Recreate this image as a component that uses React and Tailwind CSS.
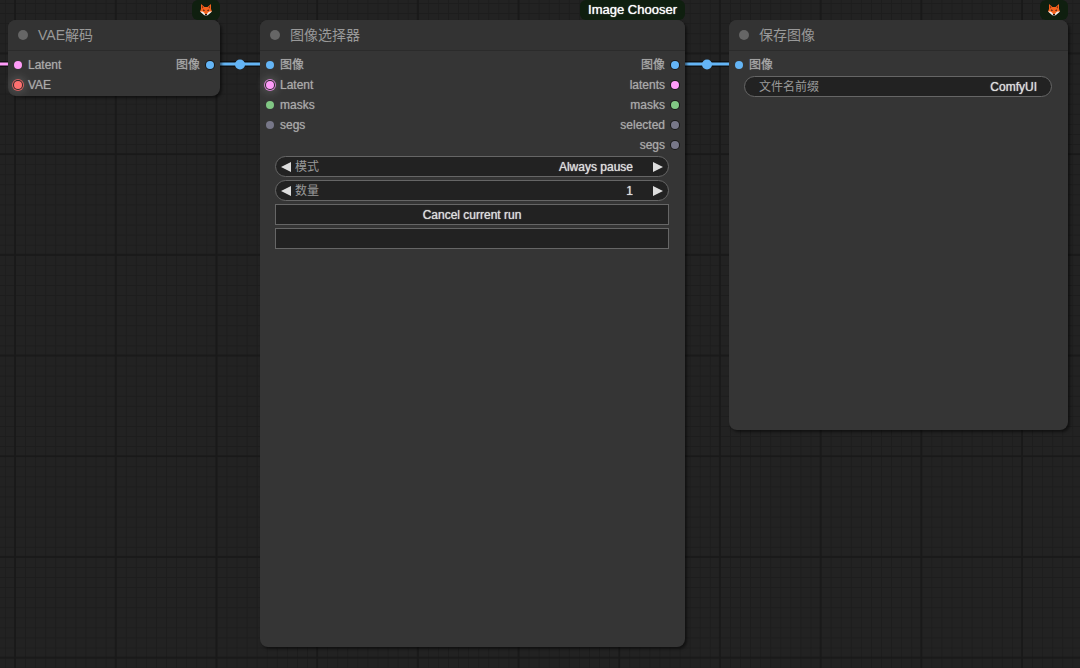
import React, { useState } from "react";
import clsx from "clsx";

const slotColors = {
  image: "bg-[#64b5f6]",
  latent: "bg-[#ff9cf9]",
  mask: "bg-[#81c784]",
  vae: "bg-[#ff7070]",
  any: "bg-[#777788]",
};

// Halo shown on inputs that accept a connection but have none yet
const haloColors = {
  latent:
    "shadow-[0_0_0_1px_#2a2a2a,0_0_0_2px_#d182cd,0_0_8px_4px_rgba(255,255,255,0.15)]",
  vae: "shadow-[0_0_0_1px_#2a2a2a,0_0_0_2px_#d35f5f,0_0_8px_4px_rgba(255,255,255,0.15)]",
};

const Grid = () => (
  <svg className="absolute inset-0 h-full w-full" aria-hidden="true">
    <defs>
      <pattern
        id="minor"
        width="10.07"
        height="10.07"
        x="15"
        y="53.4"
        patternUnits="userSpaceOnUse"
      >
        <path d="M0.5 0V10.07M0 0.5H10.07" stroke="#1d1d1d" />
      </pattern>
      <pattern
        id="major"
        width="100.7"
        height="100.7"
        x="14"
        y="52.4"
        patternUnits="userSpaceOnUse"
      >
        <path d="M1 0V100.7M0 1H100.7" stroke="#181818" strokeWidth="1.7" />
      </pattern>
    </defs>
    <rect width="100%" height="100%" fill="url(#minor)" />
    <rect width="100%" height="100%" fill="url(#major)" />
  </svg>
);

const Links = () => (
  <svg className="absolute inset-0 h-full w-full" aria-hidden="true">
    <path
      d="M0 64H18M211 64H270M675 64H739"
      stroke="#000"
      strokeOpacity="0.5"
      strokeWidth="6"
    />
    <path d="M0 64H18" stroke="#ff9cf9" strokeWidth="3" />
    <path d="M211 64H270M675 64H739" stroke="#64b5f6" strokeWidth="3" />
    <circle cx="240" cy="64.5" r="5" fill="#64b5f6" />
    <circle cx="707" cy="64.5" r="5" fill="#64b5f6" />
  </svg>
);

const Fox = () => (
  <svg viewBox="0 0 24 24" className="h-3 w-3" role="img" aria-label="fox">
    <path d="M2 0L9 6H15L22 0L22 10L24 15L16 20H8L0 15L2 10Z" fill="#f4631e" />
    <path d="M4 3L7 7L4 9ZM20 3L17 7L20 9Z" fill="#8a3414" />
    <path d="M0 15L5 15L9 18L10 21H14L15 18L19 15L24 15L16 22L12 24L8 22Z" fill="#f3f1ef" />
    <path d="M6 11L9 12V14H7ZM18 11L15 12V14H17Z" fill="#2a1710" />
    <path d="M10 20H14V22L12 24L10 22Z" fill="#1c1412" />
  </svg>
);

const Slot = ({ label, type, output, open }) => (
  <li
    className={clsx(
      "flex h-5 items-center gap-1.5 text-xs text-[#aaa]",
      output && "flex-row-reverse"
    )}
  >
    <span
      className={clsx(
        "h-2 w-2 rounded-full",
        slotColors[type],
        output && "ring-1 ring-[#1a1a1a]",
        open && haloColors[type]
      )}
    />
    {label}
  </li>
);

const Node = ({ title, badge, className, inputs, outputs = [], children }) => (
  <section
    className={clsx(
      "absolute rounded-lg bg-[#353535] shadow-[2px_2px_3px_rgba(0,0,0,0.5)]",
      className
    )}
  >
    <div className="absolute right-0 bottom-full flex h-5 items-center rounded-md bg-[#0f1f0f] px-2 text-[13px] whitespace-nowrap text-white text-shadow-[0_0_1px_#ffffff]">
      {badge}
    </div>

    <header className="flex h-[31px] items-center gap-2.5 rounded-t-lg border-b border-[#2b2b2b] bg-[#333] px-2.5">
      <span className="h-2.5 w-2.5 rounded-full bg-[#666]" />
      <h2 className="text-sm text-[#999]">{title}</h2>
    </header>

    <div className="flex justify-between px-1.5 pt-1 text-shadow-[0_0_1px_#888888]">
      <ul>
        {inputs.map((slot) => (
          <Slot key={slot.label} {...slot} />
        ))}
      </ul>
      <ul>
        {outputs.map((slot) => (
          <Slot key={slot.label} {...slot} output />
        ))}
      </ul>
    </div>

    {children && (
      <div className="flex flex-col gap-[3px] pt-px pr-4 pl-[15px]">
        {children}
      </div>
    )}
  </section>
);

const Arrow = ({ direction, label, onClick }) => (
  <button type="button" aria-label={label} onClick={onClick}>
    <svg viewBox="0 0 10 10" className="h-2.5 w-2.5" fill="#ddd">
      <path d={direction === "left" ? "M10 0V10L0 5Z" : "M0 0V10L10 5Z"} />
    </svg>
  </button>
);

const pill =
  "flex h-[21px] items-center rounded-full border border-[#666] bg-[#222] text-xs";

const valueText = "text-[#ddd] text-shadow-[0_0_1px_#dddddd]";

const modes = ["Always pause", "Repeat last selection", "Only pause if batch"];

const App = () => {
  const [mode, setMode] = useState(0);
  const [count, setCount] = useState(1);
  const [prefix, setPrefix] = useState("ComfyUI");

  const stepMode = (step) =>
    setMode((mode + step + modes.length) % modes.length);

  return (
    <main className="relative min-h-screen overflow-hidden bg-[#222] font-['Liberation_Sans','Noto_Sans_CJK_SC',sans-serif]">
      <Grid />
      <Links />

      <Node
        title="VAE解码"
        badge={<Fox />}
        className="top-5 left-2 h-[76px] w-[212px]"
        inputs={[
          { label: "Latent", type: "latent" },
          { label: "VAE", type: "vae", open: true },
        ]}
        outputs={[{ label: "图像", type: "image" }]}
      />

      <Node
        title="图像选择器"
        badge="Image Chooser"
        className="top-5 left-[260px] h-[627px] w-[425px]"
        inputs={[
          { label: "图像", type: "image" },
          { label: "Latent", type: "latent", open: true },
          { label: "masks", type: "mask" },
          { label: "segs", type: "any" },
        ]}
        outputs={[
          { label: "图像", type: "image" },
          { label: "latents", type: "latent" },
          { label: "masks", type: "mask" },
          { label: "selected", type: "any" },
          { label: "segs", type: "any" },
        ]}
      >
        <div className={clsx(pill, "gap-1 px-[5px]")}>
          <Arrow direction="left" label="Previous mode" onClick={() => stepMode(-1)} />
          <label htmlFor="mode" className="text-[#999]">
            模式
          </label>
          <select
            id="mode"
            value={mode}
            onChange={(e) => setMode(Number(e.target.value))}
            className={clsx(
              valueText,
              "mr-4 min-w-0 flex-1 appearance-none text-right [text-align-last:right] outline-none"
            )}
          >
            {modes.map((name, i) => (
              <option key={name} value={i}>
                {name}
              </option>
            ))}
          </select>
          <Arrow direction="right" label="Next mode" onClick={() => stepMode(1)} />
        </div>

        <div className={clsx(pill, "gap-1 px-[5px]")}>
          <Arrow direction="left" label="Decrease" onClick={() => setCount(count - 1)} />
          <label htmlFor="count" className="text-[#999]">
            数量
          </label>
          <input
            id="count"
            inputMode="numeric"
            value={count}
            onChange={(e) => setCount(Number(e.target.value) || 0)}
            className={clsx(
              valueText,
              "mr-4 min-w-0 flex-1 text-right outline-none"
            )}
          />
          <Arrow direction="right" label="Increase" onClick={() => setCount(count + 1)} />
        </div>

        <button
          type="button"
          className={clsx(
            valueText,
            "h-[21px] border border-[#666] bg-[#222] text-xs"
          )}
        >
          Cancel current run
        </button>
        <button
          type="button"
          aria-label="Progress selected"
          className="h-[21px] border border-[#666] bg-[#222]"
        />
      </Node>

      <Node
        title="保存图像"
        badge={<Fox />}
        className="top-5 left-[729px] h-[410px] w-[339px]"
        inputs={[{ label: "图像", type: "image" }]}
      >
        <div className={clsx(pill, "px-3.5")}>
          <label htmlFor="prefix" className="text-[#999]">
            文件名前缀
          </label>
          <input
            id="prefix"
            value={prefix}
            onChange={(e) => setPrefix(e.target.value)}
            className={clsx(
              valueText,
              "min-w-0 flex-1 text-right outline-none"
            )}
          />
        </div>
      </Node>
    </main>
  );
};

export default App;
